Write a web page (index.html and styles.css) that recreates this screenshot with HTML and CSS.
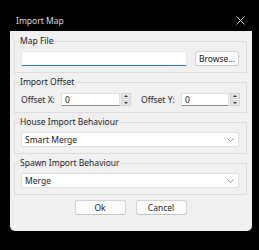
FILE: index.html
```html
<!DOCTYPE html>
<html lang="en">
<head>
    <meta charset="UTF-8">
    <meta name="viewport" content="width=device-width, initial-scale=1.0">
    <title>Import Map</title>
    <link rel="stylesheet" href="styles.css">
</head>
<body>
    <div class="window">
        <div class="title-bar">
            <span class="title">Import Map</span>
            <svg class="close" width="9" height="9" viewBox="0 0 9 9">
                <path d="M0.5 0.5 L8.5 8.5 M8.5 0.5 L0.5 8.5" stroke="#d4d4d4" stroke-width="1" fill="none"/>
            </svg>
        </div>

        <div class="client">
            <fieldset class="group">
                <legend>Map File</legend>
                <div class="file-row">
                    <div class="text-input"></div>
                    <button class="btn browse">Browse...</button>
                </div>
            </fieldset>

            <fieldset class="group">
                <legend>Import Offset</legend>
                <div class="offset-row">
                    <span class="offset-label">Offset X:</span>
                    <div class="spin spin-x">
                        <span class="spin-value">0</span>
                        <div class="spin-buttons">
                            <span class="spin-btn"><i class="arrow-up"></i></span>
                            <span class="spin-btn"><i class="arrow-down"></i></span>
                        </div>
                    </div>
                    <span class="offset-label">Offset Y:</span>
                    <div class="spin spin-y">
                        <span class="spin-value">0</span>
                        <div class="spin-buttons">
                            <span class="spin-btn"><i class="arrow-up"></i></span>
                            <span class="spin-btn"><i class="arrow-down"></i></span>
                        </div>
                    </div>
                </div>
            </fieldset>

            <fieldset class="group">
                <legend>House Import Behaviour</legend>
                <div class="combo">
                    <span>Smart Merge</span>
                    <svg width="7" height="4" viewBox="0 0 7 4">
                        <path d="M0.5 0.5 L3.5 3.5 L6.5 0.5" stroke="#8a8a8a" stroke-width="1" fill="none"/>
                    </svg>
                </div>
            </fieldset>

            <fieldset class="group">
                <legend>Spawn Import Behaviour</legend>
                <div class="combo">
                    <span>Merge</span>
                    <svg width="7" height="4" viewBox="0 0 7 4">
                        <path d="M0.5 0.5 L3.5 3.5 L6.5 0.5" stroke="#8a8a8a" stroke-width="1" fill="none"/>
                    </svg>
                </div>
            </fieldset>

            <div class="actions">
                <button class="btn">Ok</button>
                <button class="btn">Cancel</button>
            </div>
        </div>
    </div>
</body>
</html>
```

FILE: styles.css
```css
*{
    margin: 0;
    box-sizing: border-box;
}

body{
    background-color: #000;
    font-family: "Noto Sans", "Open Sans", sans-serif;
    font-size: 8.5px;
    color: #1b1b1b;
}

.window{
    margin-left: 10px;
    width: 242px;
}

.title-bar{
    height: 31px;
    display: flex;
    align-items: center;
    justify-content: space-between;
    padding: 10px 7px 0 6px;
}

.title{
    color: #dadada;
}

.client{
    background-color: #f0f0f0;
    height: 200px;
    border-radius: 0 0 5px 5px;
    padding: 4px 5px 0 4px;
    display: flex;
    flex-direction: column;
    gap: 3px;
}

.group{
    border: 1px solid #dcdcdc;
    padding: 4px 6px 6px 6px;
    min-width: 0;
}

.group legend{
    padding: 0 1px;
    margin-left: -2px;
    line-height: 12px;
}

.file-row{
    display: flex;
    gap: 8px;
    padding-right: 1px;
}

.text-input{
    flex: 1;
    height: 15px;
    background-color: #fff;
    border: 1px solid #e6e6e6;
    border-bottom: 1px solid #2a7bd0;
    border-radius: 2px 2px 0 0;
}

.btn{
    font-family: inherit;
    font-size: 8.5px;
    color: #1b1b1b;
    background-color: #fdfdfd;
    border: 1px solid #d3d3d3;
    border-bottom-color: #c4c4c4;
    border-radius: 3px;
    height: 15px;
    width: 51px;
    padding: 0;
}

.browse{
    width: 44px;
}

.offset-row{
    display: flex;
    align-items: center;
    padding-top: 1px;
}

.offset-label{
    width: 40px;
}

.spin{
    display: flex;
    height: 13px;
    margin-right: 10px;
}

.spin-x{
    width: 70px;
}

.spin-y{
    width: 59px;
    margin-right: 0;
}

.spin-value{
    flex: 1;
    background-color: #fff;
    border: 1px solid #e0e0e0;
    border-bottom-color: #8a8a8a;
    padding-left: 3px;
    line-height: 12px;
}

.spin-buttons{
    width: 11px;
    display: flex;
    flex-direction: column;
    gap: 1px;
    padding-left: 1px;
}

.spin-btn{
    flex: 1;
    background-color: #e6e6e6;
    border: 1px solid #d2d2d2;
    display: flex;
    align-items: center;
    justify-content: center;
}

.arrow-up{
    border-left: 2px solid transparent;
    border-right: 2px solid transparent;
    border-bottom: 2px solid #333;
}

.arrow-down{
    border-left: 2px solid transparent;
    border-right: 2px solid transparent;
    border-top: 2px solid #333;
}

.combo{
    height: 15px;
    background-color: #fff;
    border: 1px solid #e0e0e0;
    border-radius: 2px;
    display: flex;
    align-items: center;
    justify-content: space-between;
    padding: 0 4px 0 3px;
    margin-right: 1px;
}

.actions{
    display: flex;
    justify-content: center;
    gap: 10px;
    margin-top: 2px;
}
```
